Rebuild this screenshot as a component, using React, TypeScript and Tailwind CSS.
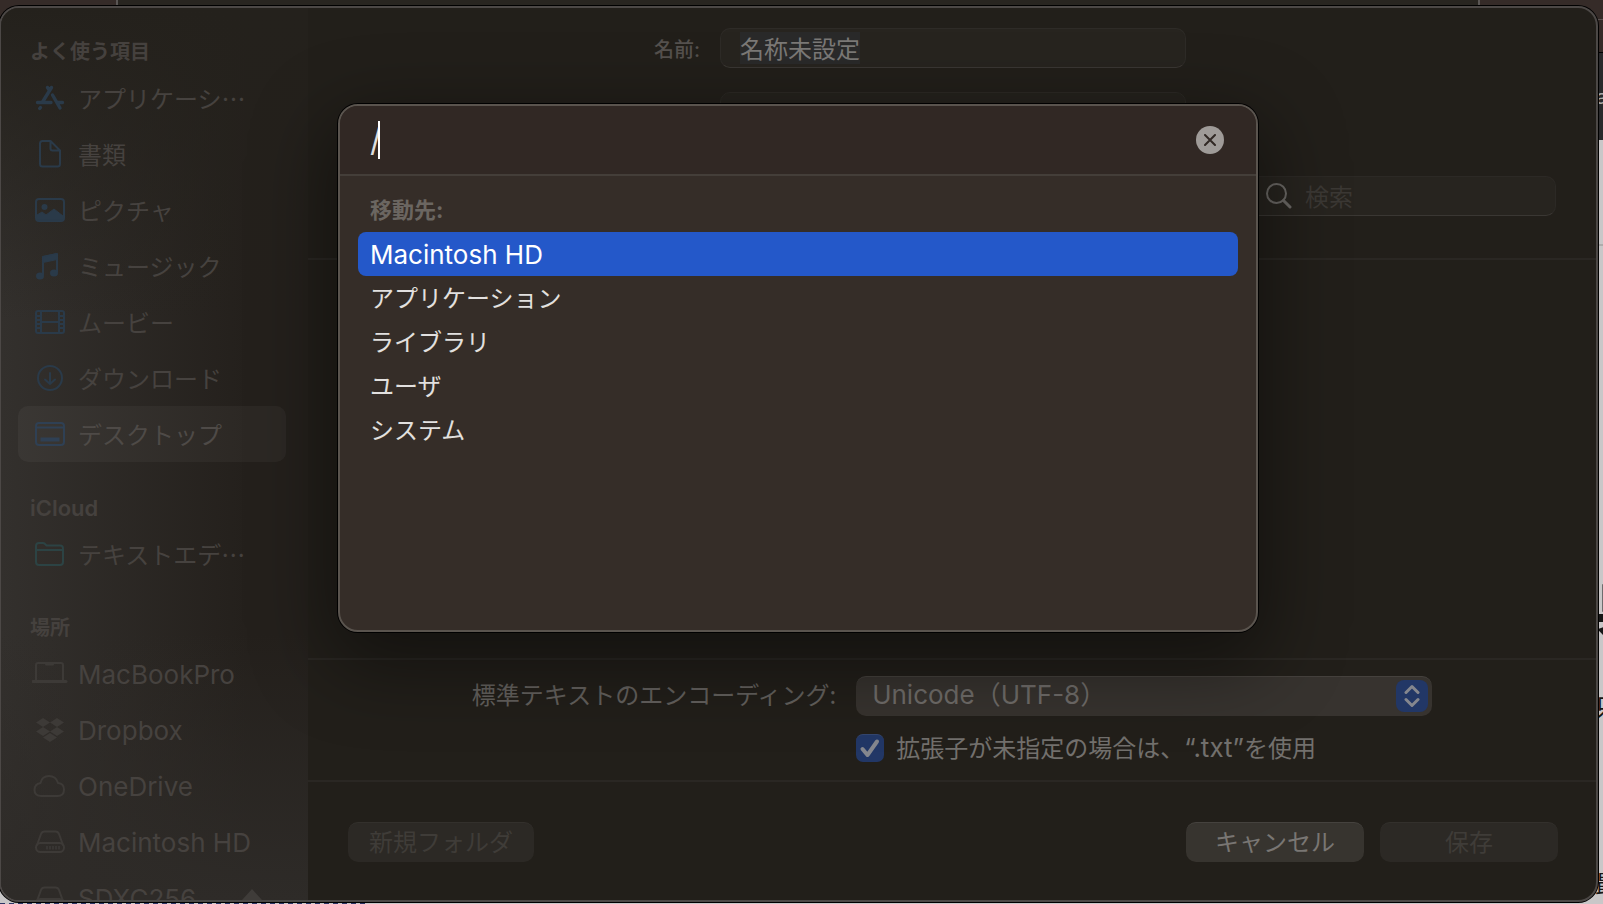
import type { ReactNode } from "react";
import { FaDropbox } from "react-icons/fa";

const svgProps = {
  fill: "none",
  stroke: "currentColor",
  strokeWidth: 2,
  strokeLinecap: "round" as const,
  strokeLinejoin: "round" as const,
};

function Icon({ children }: { children: ReactNode }) {
  return (
    <svg className="h-8 w-9 shrink-0" viewBox="0 0 36 32" {...svgProps} aria-hidden="true">
      {children}
    </svg>
  );
}

function DriveIcon() {
  return (
    <Icon>
      <path d="M5 19 9 8Q10 5.500 12.500 5.500h11Q26 5.500 27 8l4 11" />
      <rect x="4" y="17" width="28" height="9" rx="4.500" />
      <path d="M15 20v3.500M18 20v3.500M21 20v3.500M24 20v3.500M27 20v3.500" strokeWidth="1.500" strokeLinecap="butt" />
    </Icon>
  );
}

const favorites = [
  {
    name: "アプリケーシ…",
    icon: (
      <Icon>
        <path
          d="M19.500 5.500 10.500 20M15.500 5.500l2 3M5.500 20.500H19M26 20.500h4.500M8.500 25.500l-.8 1M20.500 13l7.500 13"
          strokeWidth="3.400"
        />
      </Icon>
    ),
  },
  {
    name: "書類",
    icon: (
      <Icon>
        <path d="M10.500 3h8L28 12.500V26q0 2.500-2.500 2.500h-15Q8 28.500 8 26V5.500Q8 3 10.500 3M18.500 3.500V10.500q0 2 2 2H28" />
      </Icon>
    ),
  },
  {
    name: "ピクチャ",
    icon: (
      <Icon>
        <rect x="4" y="5" width="28" height="22" rx="3" />
        <circle cx="12.500" cy="13" r="3" fill="currentColor" stroke="none" />
        <path d="M5 26v-5l5-3 4 3 8-6 9 7v4z" fill="currentColor" strokeWidth="1" />
      </Icon>
    ),
  },
  {
    name: "ミュージック",
    icon: (
      <Icon>
        <path d="M11 25V7l14-3v18" />
        <path d="M11 6.500 25 3.500v6L11 12.500z" fill="currentColor" strokeWidth="1" />
        <ellipse cx="8" cy="26" rx="4" ry="3.500" fill="currentColor" stroke="none" />
        <ellipse cx="22" cy="23" rx="4" ry="3.500" fill="currentColor" stroke="none" />
      </Icon>
    ),
  },
  {
    name: "ムービー",
    icon: (
      <Icon>
        <rect x="4" y="5" width="28" height="22" rx="2" />
        <path d="M9 5v22M27 5v22M9 16h18M4 10h5M4 14h5M4 18h5M4 22h5M27 10h5M27 14h5M27 18h5M27 22h5" />
      </Icon>
    ),
  },
  {
    name: "ダウンロード",
    icon: (
      <Icon>
        <circle cx="18" cy="16" r="12" />
        <path d="M18 11v11M13 17.500l5 4.500 5-4.500" />
      </Icon>
    ),
  },
  {
    name: "デスクトップ",
    active: true,
    icon: (
      <Icon>
        <rect x="4" y="5" width="28" height="22" rx="3" />
        <path d="M4 9.500h28" />
        <path d="M8.500 21.500h19" strokeWidth="4" strokeLinecap="butt" />
      </Icon>
    ),
  },
];

const icloud = [
  {
    name: "テキストエデ…",
    icon: (
      <Icon>
        <path d="M4 8q0-3 3-3h4q1 0 2 1l1.500 1.500H28q3 0 3 3V24q0 3-3 3H7q-3 0-3-3zM4 12h27" />
      </Icon>
    ),
  },
];

const locations = [
  {
    name: "MacBookPro",
    latin: true,
    icon: (
      <Icon>
        <path d="M4 22V7q0-2 2-2h23q2 0 2 2v15M14 6.500h7" />
        <path d="M1 23.500h33" strokeWidth="3" />
      </Icon>
    ),
  },
  {
    name: "Dropbox",
    latin: true,
    icon: (
      <span className="flex w-9 shrink-0 justify-center">
        <FaDropbox className="size-7" aria-hidden="true" />
      </span>
    ),
  },
  {
    name: "OneDrive",
    latin: true,
    icon: (
      <Icon>
        <path d="M9.500 26Q2.500 26 2.500 20 2.500 14 8.500 13 10 6 17 6q7 0 9 7 6 .5 6 6.500 0 6.500-6.500 6.500z" />
      </Icon>
    ),
  },
  { name: "Macintosh HD", latin: true, icon: <DriveIcon /> },
  { name: "SDXC256", latin: true, icon: <DriveIcon />, eject: true },
];

type Item = { name: string; icon: ReactNode; latin?: boolean; active?: boolean; eject?: boolean };

function SidebarSection({ title, items, color, latin }: { title: string; items: Item[]; color: string; latin?: boolean }) {
  return (
    <section>
      <h2
        className={`flex h-16 items-end pl-3 leading-9 text-[#45413e] ${
          latin ? "text-[22px] font-semibold" : "text-xl font-semibold"
        }`}
      >
        {title}
      </h2>
      <ul>
        {items.map((item) => (
          <li key={item.name}>
            <button
              className={`flex h-14 w-full items-center gap-[10px] rounded-[10px] pl-[14px] text-left whitespace-nowrap ${
                item.latin ? "text-[26px]" : "font-['Noto_Sans_CJK_JP',sans-serif] text-2xl"
              } ${item.active ? "bg-white/4 text-[#4e4a47]" : "text-[#46423f]"}`}
            >
              <span className={item.active ? "text-[#2f4054]" : color}>{item.icon}</span>
              {item.name}
              {item.eject && (
                <svg className="mr-6 ml-auto h-5 w-5 text-[#3f3c39]" viewBox="0 0 20 20" fill="currentColor" aria-hidden="true">
                  <path d="M10 1 20 12H0zM0 15h20v4H0z" />
                </svg>
              )}
            </button>
          </li>
        ))}
      </ul>
    </section>
  );
}

const destinations = ["Macintosh HD", "アプリケーション", "ライブラリ", "ユーザ", "システム"];

function GoToDialog() {
  return (
    <div
      role="dialog"
      aria-label="移動先"
      className="absolute top-24 right-[338px] left-[337px] h-[528px] overflow-hidden rounded-[20px] border-2 border-[#5a544e] bg-[#352d28] shadow-[0_0_0_1px_#000,0_24px_80px_8px_rgba(0,0,0,0.45)]"
    >
      <div className="flex h-[70px] items-center border-b-2 border-[#443e39] bg-[#312824] pr-8 pl-[30px]">
        <div className="flex flex-1 items-center">
          <input
            aria-label="パス"
            defaultValue="/"
            className="h-10 w-2 bg-transparent text-[32px] text-[#dfdddc] outline-none"
          />
          <span className="h-[38px] w-0.5 bg-white" />
        </div>
        <button aria-label="消去" className="flex size-7 items-center justify-center rounded-full bg-[#9f9b98] text-[#312824]">
          <svg className="size-3" viewBox="0 0 12 12" {...svgProps}>
            <path d="M1 1l10 10M11 1 1 11" />
          </svg>
        </button>
      </div>
      <div className="px-[18px] pt-3">
        <h3 className="h-11 pl-3 text-[22px] leading-[44px] font-bold text-[#6b6661]">移動先:</h3>
        <ul>
          {destinations.map((name, i) => (
            <li key={name}>
              <button
                className={`flex h-11 w-full items-center rounded-lg pl-3 ${
                  i === 0
                    ? "bg-[#2458c9] text-[26px] text-white"
                    : "pb-0.5 font-['Noto_Sans_CJK_JP',sans-serif] text-2xl text-[#e2e0df]"
                }`}
              >
                {name}
              </button>
            </li>
          ))}
        </ul>
      </div>
    </div>
  );
}

function SaveForm() {
  return (
    <div className="flex h-[252px] flex-col border-b-2 border-[#2a2723] pt-5">
      <div className="grid grid-cols-[1fr_466px_1fr] gap-x-5 gap-y-6 pl-0.5">
        <label htmlFor="filename" className="pt-1 text-right text-xl leading-9 font-medium text-[#55514e]">
          名前:
        </label>
        <div className="flex h-10 items-center rounded-[10px] border border-[#2e2b27] border-b-[#3a3733] bg-[#27241f] px-[19px]">
          <input
            id="filename"
            defaultValue="名称未設定"
            className="h-8 w-[120px] bg-[#2a2a2a] font-['Noto_Sans_CJK_JP',sans-serif] text-2xl text-[#7b7977] outline-none"
          />
        </div>
        <input aria-label="タグ" className="col-start-2 h-10 rounded-[10px] border border-[#2c2925] bg-[#25221d] outline-none" />
      </div>
      <label className="mt-11 mr-10 ml-auto flex h-10 w-[310px] items-center gap-[13px] rounded-[10px] border border-[#2c2925] border-b-[#3a3733] bg-[#27241f] pl-[19px] text-[#6b6865]">
        <svg className="size-[26px] shrink-0" viewBox="0 0 26 26" {...svgProps} aria-hidden="true">
          <circle cx="10.500" cy="10.500" r="9.500" />
          <path d="M17.500 17.500l6.500 6.500" strokeWidth="3" />
        </svg>
        <input
          aria-label="検索"
          placeholder="検索"
          className="w-full min-w-0 bg-transparent font-['Noto_Sans_CJK_JP',sans-serif] text-2xl outline-none placeholder:text-[#3b3834]"
        />
      </label>
    </div>
  );
}

function EncodingOptions() {
  return (
    <div className="grid h-[122px] grid-cols-[auto_576px] content-start justify-center gap-x-5 gap-y-[18px] border-t-2 border-[#2a2723] pt-4 font-['Noto_Sans_CJK_JP',sans-serif] text-2xl">
      <label htmlFor="encoding" className="leading-9 text-[#63605d]">
        標準テキストのエンコーディング:
      </label>
      <div className="relative">
        <select
          id="encoding"
          className="h-10 w-full appearance-none rounded-[10px] border-t border-[#45413d] bg-[#37332f] pr-12 pb-1 pl-4 font-['Inter','Noto_Sans_CJK_JP',sans-serif] text-[26px] leading-9 text-[#6f6c69] outline-none"
        >
          <option>Unicode（UTF-8）</option>
        </select>
        <span className="pointer-events-none absolute top-1 right-1 flex size-8 items-center justify-center rounded-lg bg-[#223766] text-[#85878e]">
          <svg className="h-6 w-4" viewBox="0 0 16 24" {...svgProps} strokeWidth={3} aria-hidden="true">
            <path d="M2 8.500 8 2.500l6 6M2 15.500l6 6 6-6" />
          </svg>
        </span>
      </div>
      <label className="col-start-2 flex h-7 items-center gap-3 whitespace-nowrap text-[#72706d]">
        <span className="relative size-7 shrink-0">
          <input type="checkbox" defaultChecked className="block size-7 appearance-none rounded-[7px] border-t border-[#34466f] bg-[#223766]" />
          <svg className="pointer-events-none absolute inset-0 size-7 text-[#85878e]" viewBox="0 0 28 28" {...svgProps} strokeWidth={4} aria-hidden="true">
            <path d="M6.500 15l5 6L21 7.500" />
          </svg>
        </span>
        <span>
          拡張子が未指定の場合は、<span className="font-['Inter',sans-serif] text-[26px]">“.txt”</span>を使用
        </span>
      </label>
    </div>
  );
}

function Footer() {
  return (
    <footer className="flex h-[120px] items-start gap-4 border-t-2 border-[#2a2723] pr-[38px] pl-10 pt-10 font-['Noto_Sans_CJK_JP',sans-serif] text-2xl leading-9">
      <button className="mr-auto h-10 w-[186px] rounded-[10px] border-t border-[#33302c] bg-[#2c2925] pb-1.5 text-[#3f3c38]">新規フォルダ</button>
      <button className="h-10 w-[178px] rounded-[10px] border-t border-[#45423e] bg-[#37342f] pb-1.5 text-[#797673]">キャンセル</button>
      <button className="h-10 w-[178px] rounded-[10px] border-t border-[#33302c] bg-[#2c2925] pb-1.5 text-[#3f3c38]">保存</button>
    </footer>
  );
}

// Windows that peek out from behind the save panel
function Backdrop() {
  return (
    <div className="absolute inset-0 flex flex-col" aria-hidden="true">
      <div className="flex h-[53px] shrink-0 border-b border-black bg-[#352b28]">
        <div className="w-[116px]" />
        <div className="flex-1 border-x-2 border-[#5a5654] bg-[#282520]" />
        <div className="flex w-[123px] flex-col">
          <div className="h-5 border-b border-[#5a5150]" />
        </div>
      </div>
      <div className="flex h-[87px] shrink-0 items-center justify-end overflow-hidden bg-[#29292b] text-xl text-[#a9a9a9]">
        <span className="w-[7px]">a</span>
      </div>
      <div className="flex flex-1 flex-col items-end overflow-hidden bg-[#c9c7c8] text-[#161616]">
        <div className="h-[106px] w-full shrink-0 border-b-2 border-[#aeacac]" />
        <span className="mt-[320px] w-2 text-6xl leading-[84px] font-black">呉</span>
        <span className="mt-10 w-2 text-2xl leading-9">只</span>
        <span className="mt-auto w-2 text-2xl leading-9">最</span>
      </div>
      <div className="h-px w-[366px] shrink-0 bg-[repeating-linear-gradient(to_right,#2b3566_0_5px,#c9c7c8_5px_9px)]" />
    </div>
  );
}

export default function App() {
  return (
    <div className="relative h-screen overflow-hidden bg-[#c9c7c8] font-['Inter','Noto_Sans_CJK_JP',sans-serif]" lang="ja">
      <Backdrop />

      <main className="absolute top-1.5 right-[5px] bottom-0.5 -left-px flex overflow-hidden rounded-[20px] border-2 border-[#4c4846] bg-[#221f1a] shadow-[0_0_0_1px_#000]">
        <nav className="w-[307px] shrink-0 overflow-hidden bg-[linear-gradient(to_bottom,#24211c,transparent_35%),linear-gradient(to_top,#2e2b28,transparent_30%),linear-gradient(to_right,#33302d,#24201c_80%)] pr-[22px] pl-[17px]">
          <div className="-mt-0.5">
            <SidebarSection title="よく使う項目" items={favorites} color="text-[#2a3a49]" />
            <SidebarSection title="iCloud" items={icloud} color="text-[#2c4344]" latin />
            <SidebarSection title="場所" items={locations} color="text-[#3d3a37]" />
          </div>
        </nav>

        <div className="flex min-w-0 flex-1 flex-col">
          <SaveForm />
          <div className="flex-1" />
          <EncodingOptions />
          <Footer />
        </div>

        <GoToDialog />
      </main>
    </div>
  );
}
